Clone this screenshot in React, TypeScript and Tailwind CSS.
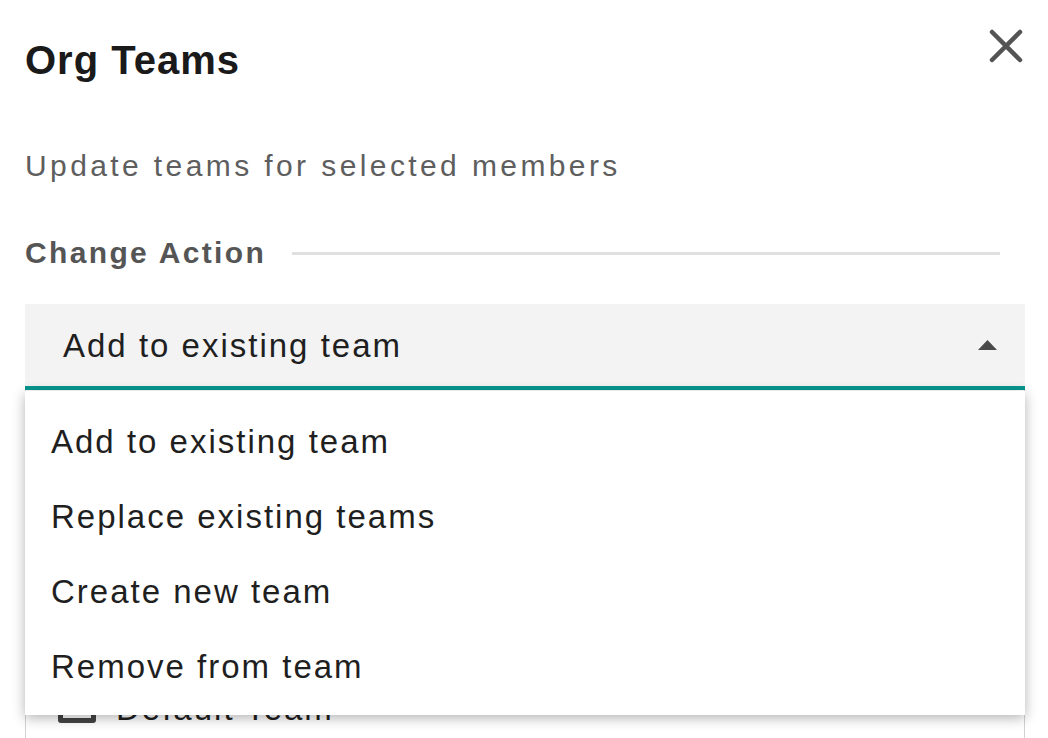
const actions = [
  'Add to existing team',
  'Replace existing teams',
  'Create new team',
  'Remove from team',
]

function CloseIcon() {
  return (
    <svg width="34" height="34" viewBox="0 0 34 34" fill="none">
      <path d="M3 3L31 31M31 3L3 31" stroke="#545454" strokeWidth="4.5" strokeLinecap="round" />
    </svg>
  )
}

export default function App() {
  return (
    <div
      className="relative h-[738px] w-full overflow-hidden bg-white pl-[25px] pr-[23px]"
      style={{ fontFamily: '"Liberation Sans", Arial, sans-serif' }}
    >
      {/* Header */}
      <div className="flex items-start justify-between pt-[29px]">
        <h1 className="mt-[11px] text-[40px] leading-[40px] font-bold tracking-[1px] text-[#1a1a1a]">
          Org Teams
        </h1>
        <button className="mr-[2px] flex h-[34px] w-[34px] items-center justify-center">
          <CloseIcon />
        </button>
      </div>

      <p className="mt-[71px] text-[30px] leading-[30px] tracking-[3.4px] text-[#5e5e5e]">
        Update teams for selected members
      </p>

      {/* Section heading */}
      <div className="mt-[57px] flex items-center">
        <h2 className="text-[30px] leading-[30px] font-bold tracking-[2.35px] text-[#555555]">
          Change Action
        </h2>
        <div className="ml-[26px] mr-[25px] h-[3px] flex-1 bg-[#e0e0e0]" />
      </div>

      {/* Select */}
      <div className="mt-[36px] flex h-[86px] items-center justify-between border-b-4 border-[#06978f] bg-[#f3f3f3] pl-[38px] pr-[28px]">
        <span className="text-[33px] leading-[33px] tracking-[2px] text-[#1f1f1f]">
          Add to existing team
        </span>
        <svg width="19" height="10" viewBox="0 0 19 10">
          <path d="M9.5 0L19 10H0Z" fill="#4a4a4a" />
        </svg>
      </div>

      {/* Team list (under the open menu) */}
      <div className="h-[400px] border-x border-[#d2d2d2] pl-[32px] pt-[295px]">
        <label className="flex items-start gap-[20px]">
          <span className="h-[38px] w-[38px] rounded-[3px] border-[5px] border-[#444444] bg-white" />
          <span className="mt-[5px] text-[33px] leading-[38px] tracking-[2px] text-[#1f1f1f]">
            Default Team
          </span>
        </label>
      </div>

      {/* Dropdown menu */}
      <ul className="absolute left-[25px] right-[23px] top-[391px] bg-white py-[12px] shadow-[0_3px_12px_rgba(0,0,0,0.3)]">
        {actions.map((a) => (
          <li
            key={a}
            className="h-[75px] pl-[26px] pt-[1px] text-[33px] leading-[75px] tracking-[2px] text-[#1f1f1f]"
          >
            {a}
          </li>
        ))}
      </ul>
    </div>
  )
}
